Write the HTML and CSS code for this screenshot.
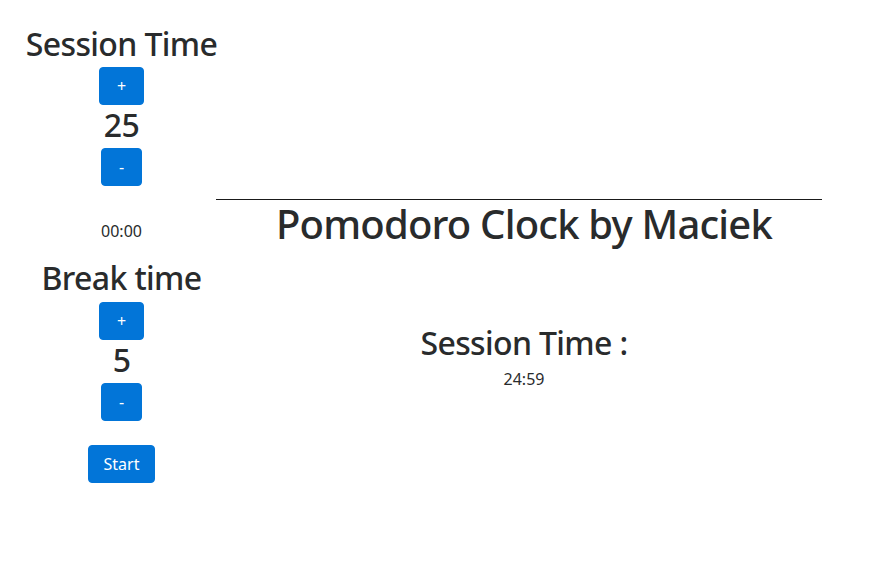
FILE: index.html
```html
<!DOCTYPE html>
<html lang="en">
<head>
<meta charset="utf-8">
<title>Pomodoro Clock</title>
<link rel="stylesheet" href="styles.css">
</head>
<body>
<div class="page">
  <div class="controls">
    <h2 class="label">Session Time</h2>
    <button class="btn">+</button>
    <h2 class="value">25</h2>
    <button class="btn">-</button>
    <p class="timer">00:00</p>
    <h2 class="label">Break time</h2>
    <button class="btn">+</button>
    <h2 class="value">5</h2>
    <button class="btn">-</button>
    <button class="btn start">Start</button>
  </div>
  <div class="main">
    <hr class="rule">
    <h1 class="title">Pomodoro Clock by Maciek</h1>
    <h2 class="status">Session Time :</h2>
    <p class="clock">24:59</p>
  </div>
</div>
</body>
</html>
```

FILE: styles.css
```css
html, body {
  margin: 0;
  padding: 0;
  background: #fff;
}
body {
  font-family: "Segoe UI", "Noto Sans", "Open Sans", sans-serif;
  font-size: 16px;
  line-height: 1.5;
  color: #292b2c;
}
.page {
  display: flex;
  align-items: flex-start;
}
.controls {
  width: 243px;
  padding-top: 24px;
  display: flex;
  flex-direction: column;
  align-items: center;
}
h1, h2 {
  margin: 0 0 6px;
  padding-top: 2px;
  font-weight: 500;
  line-height: 1.1;
  letter-spacing: -0.02em;
}
.label, .value, .status {
  font-size: 32px;
}
.btn {
  font-family: inherit;
  font-size: 16px;
  line-height: 1.25;
  color: #fff;
  background: #0275d8;
  border: 1px solid #0275d8;
  border-radius: 4px;
  padding: 8px 17px;
  margin: 0;
}
.timer {
  margin: 33px 0 15px;
}
.start {
  margin-top: 24px;
  padding: 8px 15px;
}
.main {
  width: 562px;
  padding-top: 199px;
  display: flex;
  flex-direction: column;
  align-items: center;
  text-align: center;
}
.rule {
  align-self: stretch;
  margin: 0 -17px 0 -27px;
  border: 0;
  border-top: 1px solid #1a1a1a;
  height: 0;
}
.title {
  font-size: 40px;
  margin-bottom: 77px;
}
.status {
  margin-bottom: 7px;
}
.clock {
  margin: 0;
  font-size: 16px;
}
```
